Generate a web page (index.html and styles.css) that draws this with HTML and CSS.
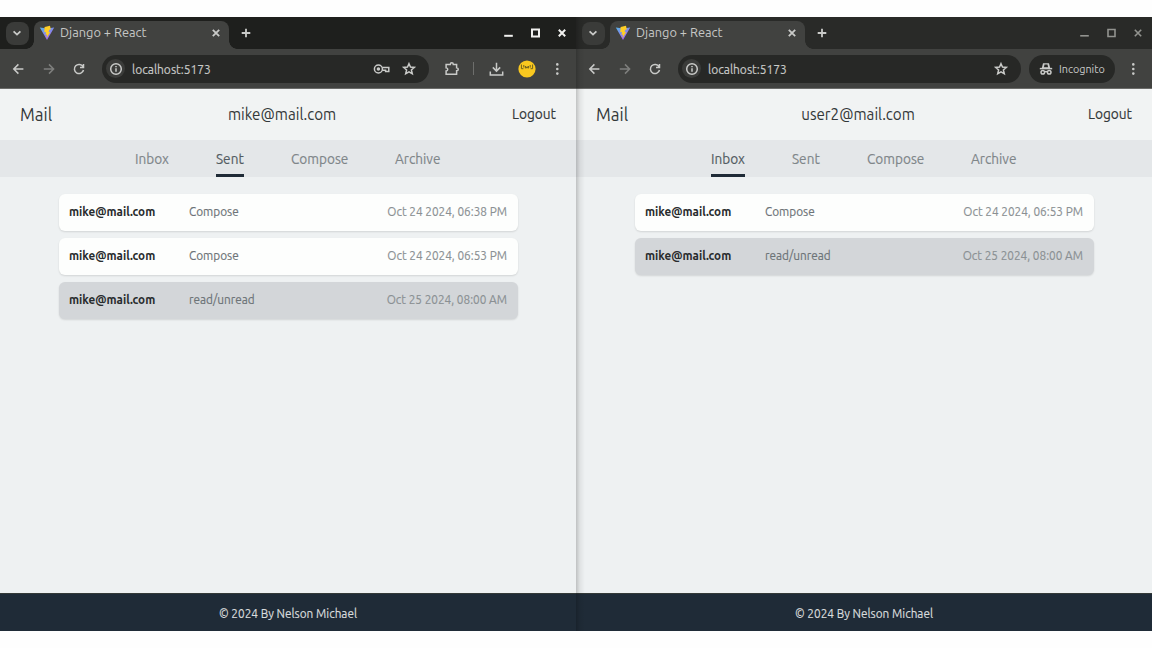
FILE: index.html
```html
<!DOCTYPE html>
<html lang="en">
<head>
<meta charset="utf-8">
<title>Django + React</title>
<link rel="stylesheet" href="styles.css">
</head>
<body>
<svg class="defs" width="0" height="0">
  <defs>
    <linearGradient id="vite" x1="0" y1="0" x2=".6" y2="1"><stop offset="0" stop-color="#58b5e8"/><stop offset="1" stop-color="#a862ef"/></linearGradient>
    <symbol id="chev" viewBox="0 0 16 16"><path d="M4.6 6.4L8 9.6l3.4-3.2"/></symbol>
    <symbol id="close" viewBox="0 0 16 16"><path d="M4.8 4.8l6.4 6.4M11.2 4.8l-6.4 6.4"/></symbol>
    <symbol id="plus" viewBox="0 0 16 16"><path d="M8 3.7v8.6M3.7 8h8.6"/></symbol>
    <symbol id="min" viewBox="0 0 16 16"><path d="M4.2 10.8h8.6"/></symbol>
    <symbol id="max" viewBox="0 0 16 16"><path d="M5 4.5h7v7H5z"/></symbol>
    <symbol id="back" viewBox="0 0 16 16"><path d="M13.4 8H3.9M8.4 3.4L3.8 8l4.6 4.6"/></symbol>
    <symbol id="fwd" viewBox="0 0 16 16"><path d="M2.8 8h9.5M8 3.4L12.6 8 8 12.6"/></symbol>
    <symbol id="reload" viewBox="0 0 16 16"><path d="M12 5.7A4.6 4.6 0 1 0 12.5 9M12.5 3v3.5H9"/></symbol>
    <symbol id="info" viewBox="0 0 16 16"><circle cx="8" cy="8" r="5.3"/><path d="M8 7.3v3.4M8 4.9v1.4"/></symbol>
    <symbol id="key" viewBox="0 0 18 16"><circle cx="5.4" cy="8" r="4"/><circle cx="5.4" cy="8" r="1" fill="currentColor"/><path d="M9.2 6.6h6.6v4h-3.2V9.3H9.3"/></symbol>
    <symbol id="star" viewBox="0 0 16 16"><path d="M8 2.7l1.5 3.4 3.8.3-2.9 2.5.9 3.8L8 10.8l-3.3 1.9.9-3.8-2.9-2.5 3.8-.3z"/></symbol>
    <symbol id="puzzle" viewBox="0 0 16 16"><path d="M2.1 3.4h4.2c0-2.2 3-2.2 3 0h3.3v3.3c2.2.1 2.2 3 0 3.1v3.5H2.1V10c2.2-.1 2.2-3.2 0-3.3z"/></symbol>
    <symbol id="down" viewBox="0 0 16 16"><path d="M8.5 1.8v8M4.8 6.4l3.7 3.7 3.7-3.7M2.3 10.4v3.5h12.4v-3.5"/></symbol>
    <symbol id="dots" viewBox="0 0 16 16"><g fill="currentColor" stroke="none"><circle cx="8.3" cy="3.4" r="1.3"/><circle cx="8.3" cy="8" r="1.3"/><circle cx="8.3" cy="12.6" r="1.3"/></g></symbol>
    <symbol id="incog" viewBox="0 0 16 16"><path d="M3.7 7.4L5 2.2h6l1.3 5.2z" fill="currentColor" stroke="none"/><path d="M5.9 6.2l.6-2.6h3l.6 2.6z" fill="#272826" stroke="none"/><path d="M1.8 7.6h12.4"/><circle cx="4.8" cy="11.2" r="1.8"/><circle cx="11.2" cy="11.2" r="1.8"/><path d="M6.6 10.8q1.4-.8 2.8 0"/></symbol>
    <symbol id="favicon" viewBox="0 0 16 16"><path d="M.8 2.5L8 15l7.2-12.5L8 3.6z" fill="url(#vite)" stroke="none"/><path d="M11 .8L5.6 1.9l-.3 5.4 1.7-.3-.5 3 1.5-.5-.5 3.5 3.8-6-1.7.3.6-2.5 1.6-.3z" fill="#ffce25" stroke="none"/></symbol>
  </defs>
</svg>
<main class="desktop">
  <section class="window">
    <div class="tabstrip">
      <div class="tab-search"><svg class="icon bold"><use href="#chev"/></svg></div>
      <div class="tab"><svg class="icon"><use href="#favicon"/></svg><span class="tab-title">Django + React</span><svg class="icon bold"><use href="#close"/></svg></div>
      <svg class="icon new-tab bold"><use href="#plus"/></svg>
      <div class="controls"><svg class="icon"><use href="#min"/></svg><svg class="icon"><use href="#max"/></svg><svg class="icon"><use href="#close"/></svg></div>
    </div>
    <div class="toolbar">
      <div class="history"><svg class="icon"><use href="#back"/></svg><svg class="icon dim"><use href="#fwd"/></svg><svg class="icon"><use href="#reload"/></svg></div>
      <div class="address"><span class="site-info"><svg class="icon"><use href="#info"/></svg></span><span class="url">localhost:5173</span><svg class="icon key"><use href="#key"/></svg><svg class="icon"><use href="#star"/></svg></div>
      <div class="actions"><svg class="icon puzzle"><use href="#puzzle"/></svg><i class="divider"></i><svg class="icon download"><use href="#down"/></svg>
        <svg class="avatar" viewBox="0 0 18 18"><circle cx="9" cy="9" r="8.6" fill="#f9c81f"/><path d="M3.4 4.5v4.2h2M14.6 4.5v4.2h-2M5.8 5v2.5M7.4 8.4V6l1.5 2.2L10.4 6v2.4M12.2 5v2.6" fill="none" stroke="#6e601f" stroke-width="1"/></svg></div>
      <svg class="icon menu"><use href="#dots"/></svg>
    </div>
    <header class="header"><h1 class="brand">Mail</h1><span class="account">mike@mail.com</span><a class="logout">Logout</a></header>
    <nav class="nav"><a class="link inbox"><span>Inbox</span></a><a class="link sent active"><span>Sent</span></a><a class="link compose"><span>Compose</span></a><a class="link archive"><span>Archive</span></a></nav>
    <div class="mails">
      <article class="mail"><b class="sender">mike@mail.com</b><span class="subject">Compose</span><time class="date">Oct 24 2024, 06:38 PM</time></article>
      <article class="mail"><b class="sender">mike@mail.com</b><span class="subject">Compose</span><time class="date">Oct 24 2024, 06:53 PM</time></article>
      <article class="mail read"><b class="sender">mike@mail.com</b><span class="subject">read/unread</span><time class="date">Oct 25 2024, 08:00 AM</time></article>
    </div>
    <footer class="footer"><span class="copyright">© 2024 By Nelson Michael</span></footer>
  </section>
  <section class="window inactive">
    <div class="tabstrip">
      <div class="tab-search"><svg class="icon bold"><use href="#chev"/></svg></div>
      <div class="tab"><svg class="icon"><use href="#favicon"/></svg><span class="tab-title">Django + React</span><svg class="icon bold"><use href="#close"/></svg></div>
      <svg class="icon new-tab bold"><use href="#plus"/></svg>
      <div class="controls"><svg class="icon"><use href="#min"/></svg><svg class="icon"><use href="#max"/></svg><svg class="icon"><use href="#close"/></svg></div>
    </div>
    <div class="toolbar">
      <div class="history"><svg class="icon"><use href="#back"/></svg><svg class="icon dim"><use href="#fwd"/></svg><svg class="icon"><use href="#reload"/></svg></div>
      <div class="address"><span class="site-info"><svg class="icon"><use href="#info"/></svg></span><span class="url">localhost:5173</span><svg class="icon"><use href="#star"/></svg></div>
      <div class="incognito"><svg class="icon"><use href="#incog"/></svg><span>Incognito</span></div>
      <svg class="icon menu"><use href="#dots"/></svg>
    </div>
    <header class="header"><h1 class="brand">Mail</h1><span class="account">user2@mail.com</span><a class="logout">Logout</a></header>
    <nav class="nav"><a class="link inbox active"><span>Inbox</span></a><a class="link sent"><span>Sent</span></a><a class="link compose"><span>Compose</span></a><a class="link archive"><span>Archive</span></a></nav>
    <div class="mails">
      <article class="mail"><b class="sender">mike@mail.com</b><span class="subject">Compose</span><time class="date">Oct 24 2024, 06:53 PM</time></article>
      <article class="mail read"><b class="sender">mike@mail.com</b><span class="subject">read/unread</span><time class="date">Oct 25 2024, 08:00 AM</time></article>
    </div>
    <footer class="footer"><span class="copyright">© 2024 By Nelson Michael</span></footer>
  </section>
</main>
</body>
</html>
```
FILE: styles.css
```css
* { box-sizing: border-box; }
body { margin: 0; background: #fefefe; font-family: Ubuntu, "Noto Sans", sans-serif; overflow: hidden; }
.defs { position: absolute; }
.desktop { display: flex; height: 648px; padding: 17px 0; }
.window { position: relative; display: flex; flex-direction: column; width: 576px; height: 614px; background: #eef1f2; white-space: nowrap; }
.icon { display: block; width: 16px; height: 16px; flex: none; fill: none; stroke: currentColor; stroke-width: 1.5; color: #c9cac8; overflow: visible; }
.bold { stroke-width: 1.8; }
.tabstrip { display: flex; align-items: center; height: 32px; padding: 0 6px; background: #1e1f1d; }
.inactive .tabstrip { background: #292a28; }
.tab-search { display: flex; align-items: center; justify-content: center; width: 23px; height: 23px; padding-right: 1px; border-radius: 8px; background: #3a3b39; }
.tab { position: relative; display: flex; align-items: center; width: 195px; height: 28px; margin: 4px 0 0 5px; padding: 0 5px 5px; border-radius: 8px 8px 0 0; background: #414240; }
.tab::before, .tab::after { content: ""; position: absolute; bottom: 0; width: 8px; height: 8px; }
.tab::before { left: -8px; background: radial-gradient(circle at 0 0, transparent 7.5px, #414240 8px); }
.tab::after { right: -8px; background: radial-gradient(circle at 100% 0, transparent 7.5px, #414240 8px); }
.tab-title { flex: 1; margin: -1px 0 0 5px; font-size: 12.8px; color: #c6c7c5; }
.new-tab { margin-left: 9px; }
.controls { display: flex; gap: 11px; margin-left: auto; }
.controls .icon { stroke-width: 2; color: #f1f1ef; }
.inactive .controls .icon { color: #92938f; stroke-width: 1.6; }
.toolbar { display: flex; align-items: center; height: 40px; padding: 0 11px 0 10px; border-bottom: 1px solid #6a6b69; background: #414240; }
.history { display: flex; gap: 14.5px; }
.dim { color: #7e7f7d; }
.address { display: flex; align-items: center; width: 327px; height: 28px; margin-left: 15px; padding: 0 12px 0 4px; border-radius: 14px; background: #272826; }
.inactive .address { width: 343px; }
.site-info { display: flex; align-items: center; justify-content: center; width: 19px; height: 19px; border-radius: 50%; background: #3b3c3a; }
.url { flex: 1; margin-left: 7px; font-size: 12px; color: #c9cac8; }
.key { width: 18px; margin-right: 10px; }
.actions { display: flex; align-items: center; margin-left: 15px; }
.divider { width: 1px; height: 13px; margin: 0 14px 0 13px; background: #6d6e6c; }
.avatar { width: 18px; height: 18px; margin-left: 14px; }
.menu { margin-left: auto; }
.incognito { display: flex; align-items: center; gap: 5px; width: 86px; height: 28px; margin-left: 8px; padding: 0 9px; border-radius: 14px; background: #272826; font-size: 10.8px; color: #c9cac8; }
/* Slightly condensed lettering */
.url, .logout, .link span, .sender, .subject, .date, .copyright { transform: scaleY(1.12); -webkit-text-stroke: .15px currentColor; }
.header { display: flex; align-items: center; justify-content: space-between; height: 51px; padding: 0 20px; background: #f1f3f3; color: #333839; }
.brand { margin: 0; font-size: 17px; font-weight: 400; }
.account { font-size: 15.2px; }
.brand, .account { transform: scaleY(1.05); }
.logout { margin-bottom: 3px; font-size: 13.7px; }
.nav { display: flex; justify-content: center; gap: 47px; height: 37px; background: #e4e7e9; }
.link { height: 37px; border-bottom: 3px solid transparent; font-size: 13.6px; line-height: 36px; color: #7f8689; }
.link span { display: block; height: 34px; }
.inbox { width: 34px; }
.sent { width: 28px; }
.compose { width: 57px; }
.archive { width: 46px; }
.active { border-bottom-color: #1f2b37; color: #535c62; }
.mails { display: flex; flex: 1; flex-direction: column; gap: 7px; width: 459px; margin: 17px 58px 0 59px; }
.mail { display: flex; align-items: center; height: 37px; padding: 0 11px 5px 10px; border-radius: 6px; background: #fdfefd; box-shadow: 0 1px 2px rgba(0,0,0,.12); font-size: 11.8px; }
.read { background: #d3d6d9; }
.sender { width: 120px; font-size: 11.7px; font-weight: 700; color: #292c2e; -webkit-text-stroke: 0; }
.subject { flex: 1; color: #6c7377; }
.date { color: #8a9093; }
.footer { display: flex; align-items: center; justify-content: center; height: 38px; border-top: 1px solid #343a38; background: #1f2b37; color: #d9dcdd; font-size: 11.8px; }
.inactive::before { content: ""; position: absolute; inset: 0 auto 0 0; width: 9px; background: linear-gradient(90deg, rgba(0,0,0,.2), rgba(0,0,0,.06) 4px, transparent); }
```
